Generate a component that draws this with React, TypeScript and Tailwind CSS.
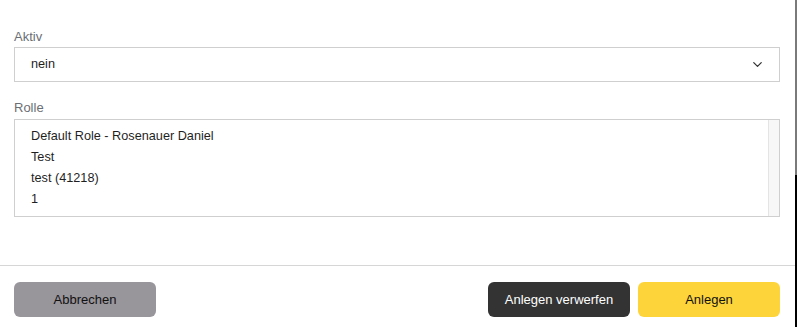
import React from 'react';
import { ChevronDown } from 'lucide-react';

const roles = ['Default Role - Rosenauer Daniel', 'Test', 'test (41218)', '1'];

export default function App() {
  return (
    <div className="flex h-[327px] w-full bg-white text-[13px] text-[#1f1f1f]" style={{ fontFamily: '"Liberation Sans", Arial, sans-serif' }}>
      <div className="flex flex-1 flex-col">
        {/* Form fields */}
        <div className="flex flex-col pl-[14px] pr-[15px] pt-[29px]">
          <label className="mb-[2px] h-[16px] leading-[16px] text-[#6b6e74]">Aktiv</label>
          <div className="flex h-[35px] items-center justify-between border border-[#cfcfcf] pl-[16px] pr-[14px] text-[12.7px]">
            <span>nein</span>
            <ChevronDown className="h-[15px] w-[15px] text-[#333]" strokeWidth={2} />
          </div>

          <label className="mb-[3px] mt-[18px] h-[16px] leading-[16px] text-[#6b6e74]">Rolle</label>
          <div className="flex h-[98px] border border-[#cfcfcf]">
            <div className="flex flex-1 flex-col py-[6px] pl-[16px] text-[12.7px]">
              {roles.map((r) => (
                <div key={r} className="h-[21px] leading-[21px]">{r}</div>
              ))}
            </div>
            <div className="w-[11px] border-l border-[#e4e4e4] bg-[#f7f7f7]" />
          </div>
        </div>

        <div className="mt-[48px] border-t border-[#d6d6d6]" />

        {/* Footer */}
        <div className="flex items-center pl-[14px] pr-[15px] pt-[16px]">
          <button className="h-[35px] w-[142px] rounded-[6px] bg-[#98959b] text-[13px] text-[#111]">Abbrechen</button>
          <div className="ml-auto flex gap-[8px]">
            <button className="h-[35px] w-[142px] rounded-[6px] bg-[#333333] text-[13px] text-white">Anlegen verwerfen</button>
            <button className="h-[35px] w-[142px] rounded-[6px] bg-[#fdd43a] text-[13px] text-[#111]">Anlegen</button>
          </div>
        </div>
      </div>

      {/* window scrollbar edge */}
      <div className="flex w-[2px] flex-col">
        <div className="h-[175px] bg-[#7a7a7a]" />
        <div className="flex-1 bg-black" />
      </div>
    </div>
  );
}
